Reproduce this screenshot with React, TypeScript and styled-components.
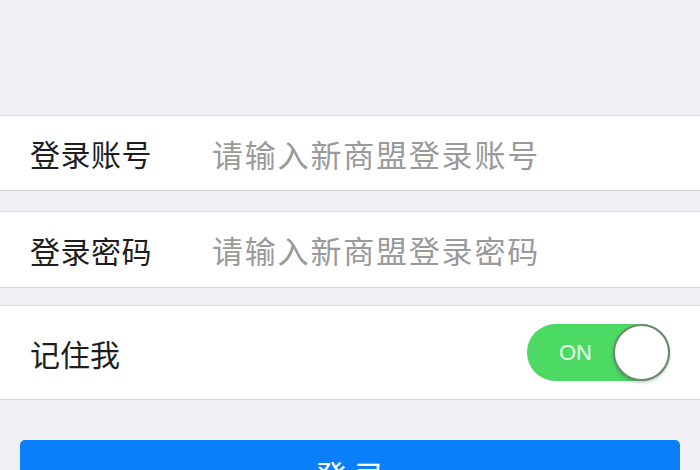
import React from 'react';
import styled, { createGlobalStyle } from 'styled-components';

const GlobalStyle = createGlobalStyle`
  html, body {
    margin: 0;
    padding: 0;
    background: #efeff4;
    overflow: hidden;
  }
  body {
    font-family: "Noto Sans CJK SC", "Noto Sans", sans-serif;
  }
`;

const Page = styled.div`
  width: 700px;
  height: 470px;
  display: flex;
  flex-direction: column;
  padding-top: 115px;
  box-sizing: border-box;
  overflow: hidden;
`;

const Row = styled.div<{ $h: number; $gap: number }>`
  display: flex;
  align-items: center;
  flex-shrink: 0;
  height: ${(p) => p.$h}px;
  margin-bottom: ${(p) => p.$gap}px;
  background: #ffffff;
  border-top: 1px solid #dcdce0;
  border-bottom: 1px solid #d4d4d9;
  padding: 0 30px;
`;

const Label = styled.div`
  width: 182px;
  flex-shrink: 0;
  font-size: 30px;
  color: #1e1e1e;
  letter-spacing: 0.5px;
`;

const Input = styled.input`
  flex: 1;
  min-width: 0;
  border: none;
  outline: none;
  background: transparent;
  padding: 0;
  font-family: "Noto Sans CJK SC", sans-serif;
  font-size: 31px;
  letter-spacing: 1.8px;
  color: #333;
  &::placeholder {
    color: #9a9a9a;
  }
`;

const SwitchLabel = styled.div`
  flex: 1;
  font-size: 30px;
  color: #1e1e1e;
`;

const Toggle = styled.div`
  position: relative;
  width: 143px;
  height: 57px;
  border-radius: 29px;
  background: #4cd964;
  display: flex;
  align-items: center;
  box-sizing: border-box;
  padding-left: 32px;
`;

const ToggleText = styled.span`
  font-family: "Liberation Sans", Arial, sans-serif;
  font-size: 22px;
  color: #e6ffe6;
`;

const Knob = styled.div`
  position: absolute;
  right: 0;
  top: 0;
  width: 57px;
  height: 57px;
  box-sizing: border-box;
  border-radius: 50%;
  background: #ffffff;
  border: 2px solid #6c8a6e;
  box-shadow: 0 2px 3px rgba(0, 0, 0, 0.2);
`;

const Button = styled.button`
  margin: 40px 20px 0;
  height: 90px;
  flex-shrink: 0;
  display: flex;
  justify-content: center;
  align-items: flex-start;
  border: none;
  border-radius: 5px;
  background: #0b7ef9;
  color: #ffffff;
  font-family: "Noto Sans CJK SC", sans-serif;
  font-size: 32px;
  letter-spacing: 6px;
  padding: 12px 0 0 6px;
`;

export default function App() {
  return (
    <Page>
      <GlobalStyle />
      <Row $h={74} $gap={20}>
        <Label>登录账号</Label>
        <Input placeholder="请输入新商盟登录账号" />
      </Row>
      <Row $h={75} $gap={17}>
        <Label>登录密码</Label>
        <Input type="password" placeholder="请输入新商盟登录密码" />
      </Row>
      <Row $h={93} $gap={0}>
        <SwitchLabel>记住我</SwitchLabel>
        <Toggle>
          <ToggleText>ON</ToggleText>
          <Knob />
        </Toggle>
      </Row>
      <Button>登录</Button>
    </Page>
  );
}
